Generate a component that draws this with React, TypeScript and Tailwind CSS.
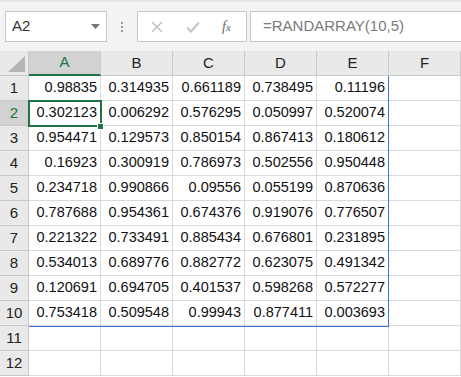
import React from "react";

const cols = ["A", "B", "C", "D", "E", "F"];

const data: string[][] = [
  ["0.98835", "0.314935", "0.661189", "0.738495", "0.11196"],
  ["0.302123", "0.006292", "0.576295", "0.050997", "0.520074"],
  ["0.954471", "0.129573", "0.850154", "0.867413", "0.180612"],
  ["0.16923", "0.300919", "0.786973", "0.502556", "0.950448"],
  ["0.234718", "0.990866", "0.09556", "0.055199", "0.870636"],
  ["0.787688", "0.954361", "0.674376", "0.919076", "0.776507"],
  ["0.221322", "0.733491", "0.885434", "0.676801", "0.231895"],
  ["0.534013", "0.689776", "0.882772", "0.623075", "0.491342"],
  ["0.120691", "0.694705", "0.401537", "0.598268", "0.572277"],
  ["0.753418", "0.509548", "0.99943", "0.877411", "0.003693"],
  [],
  [],
];

function Toolbar() {
  return (
    <div className="h-[51px] bg-[#f3f3f3] flex items-start pt-[11px] pl-[5px] border-t-2 border-[#e6e6e6]">
      {/* Name box */}
      <div className="w-[102px] h-[31px] -mt-[2px] bg-white border border-[#c6c6c6] flex items-center justify-between pl-[6px] pr-[6px]">
        <span className="text-[15px] text-[#333]">A2</span>
        <svg width="9" height="5" viewBox="0 0 9 5">
          <path d="M0 0h9L4.5 5z" fill="#777" />
        </svg>
      </div>

      {/* Separator dots */}
      <div className="w-[30px] h-[31px] -mt-[2px] flex flex-col items-center justify-center gap-[2px]">
        <span className="w-[2px] h-[2px] bg-[#9a9a9a]" />
        <span className="w-[2px] h-[2px] bg-[#9a9a9a]" />
        <span className="w-[2px] h-[2px] bg-[#9a9a9a]" />
      </div>

      {/* Cancel / enter / fx */}
      <div className="w-[110px] h-[31px] -mt-[2px] bg-white border border-[#c6c6c6] flex items-center">
        <svg className="ml-[13px]" width="12" height="12" viewBox="0 0 12 12">
          <path d="M1 1l10 10M11 1L1 11" stroke="#bdbdbd" strokeWidth="1.4" />
        </svg>
        <svg className="ml-[23px]" width="14" height="12" viewBox="0 0 14 12">
          <path d="M1 6.5l4 4L13 1.5" stroke="#c4c4c4" strokeWidth="2" fill="none" />
        </svg>
        <span
          className="ml-[22px] text-[14px] italic text-[#666]"
          style={{ fontFamily: '"Liberation Serif", serif' }}
        >
          f<span className="text-[11px]">x</span>
        </span>
      </div>

      {/* Formula bar */}
      <div className="flex-1 h-[31px] -mt-[2px] ml-[3px] bg-white border border-r-0 border-[#c6c6c6] flex items-center pl-[12px]">
        <span className="text-[15px] text-[#7a7a7a]">=RANDARRAY(10,5)</span>
      </div>
    </div>
  );
}

function Sheet() {
  return (
    <div className="relative grid grid-cols-[29px_repeat(6,72px)] auto-rows-[25px]">
      {/* Corner */}
      <div className="relative bg-[#e9e9e9] border-r border-b border-[#c9c9c9]">
        <svg className="absolute right-[3px] bottom-[3px]" width="17" height="16" viewBox="0 0 17 16">
          <path d="M17 0V16H0z" fill="#b4b4b4" />
        </svg>
      </div>

      {/* Column headers */}
      {cols.map((c) =>
        c === "A" ? (
          <div
            key={c}
            className="bg-[#d2d2d2] border-r border-b-2 border-r-[#c9c9c9] border-b-[#217346] flex items-center justify-center text-[15px] text-[#217346]"
          >
            {c}
          </div>
        ) : (
          <div
            key={c}
            className="bg-[#e9e9e9] border-r border-b border-[#c9c9c9] flex items-center justify-center text-[15px] text-[#222]"
          >
            {c}
          </div>
        )
      )}

      {/* Rows */}
      {data.map((row, r) => (
        <React.Fragment key={r}>
          <div
            className={
              r === 1
                ? "bg-[#d2d2d2] border-r border-b border-[#c9c9c9] flex items-center justify-center text-[15px] text-[#217346]"
                : "bg-[#e9e9e9] border-r border-b border-[#c9c9c9] flex items-center justify-center text-[15px] text-[#222]"
            }
          >
            {r + 1}
          </div>
          {cols.map((c, ci) => (
            <div
              key={c}
              className="bg-white border-r border-b border-[#d9d9d9] flex items-center justify-end pr-[3px] text-[14.5px] text-[#111]"
            >
              {row[ci] ?? ""}
            </div>
          ))}
        </React.Fragment>
      ))}

      {/* Spill range border */}
      <div className="absolute left-[29px] top-[25px] w-[360px] h-[251px] border-r border-b border-[#3b74d9] pointer-events-none" />

      {/* Active cell */}
      <div className="absolute left-[28px] top-[49px] w-[74px] h-[27px] border-2 border-[#217346] pointer-events-none" />
      <div className="absolute left-[97px] top-[72px] w-[7px] h-[7px] bg-[#217346] border border-white" />
    </div>
  );
}

export default function App() {
  return (
    <div
      className="w-[461px] h-[377px] overflow-hidden bg-white"
      style={{ fontFamily: '"Liberation Sans", "Noto Sans CJK JP", sans-serif' }}
    >
      <Toolbar />
      <Sheet />
    </div>
  );
}
